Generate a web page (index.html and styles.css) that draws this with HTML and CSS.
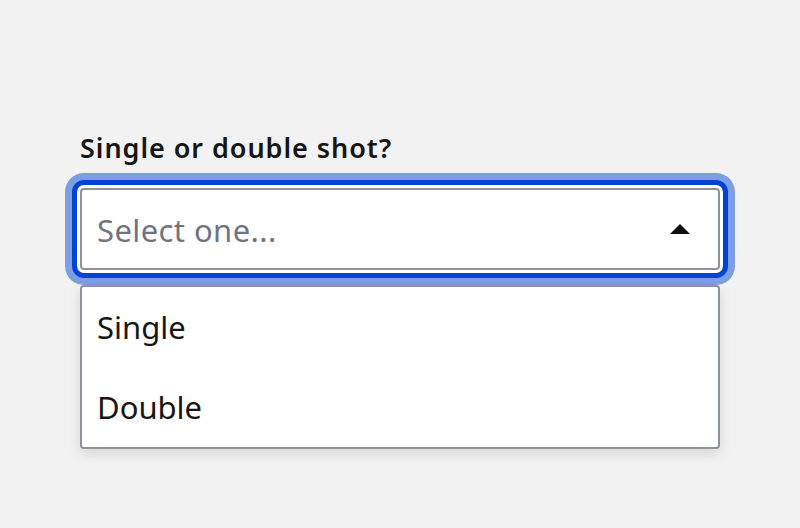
FILE: index.html
```html
<!DOCTYPE html>
<html>
<head>
<meta charset="utf-8">
<link rel="stylesheet" href="styles.css">
</head>
<body>
<div class="page">
  <div class="field">
    <label class="label">Single or double shot?</label>
    <div class="focus-ring">
      <div class="select">
        <span class="placeholder">Select one...</span>
        <span class="caret"></span>
      </div>
    </div>
    <ul class="menu">
      <li class="option">Single</li>
      <li class="option">Double</li>
    </ul>
  </div>
</div>
</body>
</html>
```
FILE: styles.css
```css
html, body {
  margin: 0;
  padding: 0;
  background: #f2f2f2;
  font-family: "Noto Sans", "Open Sans", sans-serif;
}
.page {
  width: 800px;
  height: 528px;
  padding-top: 132px;
  box-sizing: border-box;
}
.field {
  margin-left: 80px;
  width: 640px;
}
.label {
  display: block;
  font-size: 27px;
  font-weight: 600;
  letter-spacing: 0.95px;
  color: #161616;
  line-height: 32px;
  margin-bottom: 16px;
}
.focus-ring {
  margin: 0 -8px;
  padding: 3px;
  border: 5px solid #0044d4;
  border-radius: 12px;
  background: #fff;
  box-shadow: 0 0 0 7px #7d9ee5;
}
.select {
  height: 78px;
  border: 2px solid #8d929b;
  border-radius: 4px;
  background: #fff;
  display: flex;
  align-items: center;
  justify-content: space-between;
  padding: 0 28px 0 15px;
}
.placeholder {
  font-size: 31px;
  letter-spacing: 0.4px;
  color: #6f7480;
  position: relative;
  top: 1px;
}
.caret {
  width: 0;
  height: 0;
  border-left: 10px solid transparent;
  border-right: 10px solid transparent;
  border-bottom: 10px solid #111;
}
.menu {
  list-style: none;
  margin: 7px 0 0;
  padding: 0;
  background: #fff;
  border: 2px solid #8d929b;
  border-radius: 4px;
  box-shadow: 0 4px 14px rgba(0,0,0,0.12);
}
.option {
  height: 80px;
  display: flex;
  align-items: center;
  padding-left: 15px;
  font-size: 31px;
  color: #161616;
}
```
